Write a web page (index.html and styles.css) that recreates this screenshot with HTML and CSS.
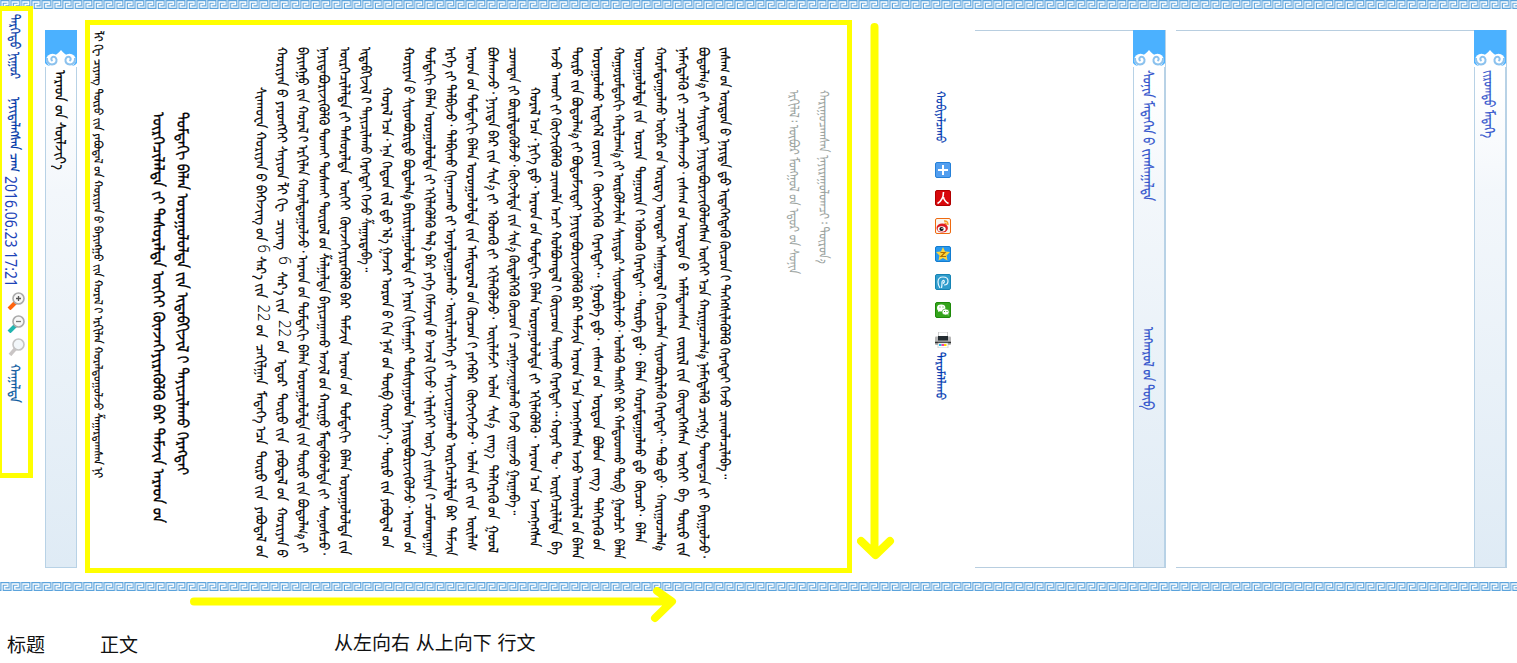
FILE: index.html
```
<!DOCTYPE html>
<html lang="mn-Mong">
<head>
<meta charset="utf-8">
<title>ᠮᠡᠳᠡᠭᠡ</title>
<link rel="stylesheet" href="styles.css">
</head>
<body>
<svg class="defs" width="0" height="0">
  <defs>
    <pattern id="meander" width="10.34" height="9" patternUnits="userSpaceOnUse">
      <path d="M7.200 3.200H3.200V8.400H11.200V.6M.86 9V.6H9.200V5.800H5.200M-6 8.400H.86" fill="none" stroke="#5ba3dc" stroke-width="1.150"/>
    </pattern>
    <symbol id="cap" viewBox="0 0 32 37">
      <path d="M0 0H32V37H0Z" fill="#4bb1ff"/>
      <path d="M0 37V33Q2 36 6 36Q9 30 8 26Q12 25 16 20Q20 25 24 26Q23 30 26 36Q30 36 32 33V37Z" fill="#fff"/>
      <circle cx="7.500" cy="30" r="6.300" fill="#fff"/><circle cx="24.500" cy="30" r="6.300" fill="#fff"/>
      <path d="M2 28Q1.500 34 7 34.500Q12 34 11.500 29.500Q10.500 26 7.500 27Q5 29 7.500 31M30 28Q30.500 34 25 34.500Q20 34 20.500 29.500Q21.500 26 24.500 27Q27 29 24.500 31" fill="none" stroke="#8cc2ee" stroke-width="2"/>
    </symbol>
  </defs>
</svg>

<svg class="border" width="1517" height="9"><rect width="1517" height="9" fill="url(#meander)"/></svg>

<div class="page">
  <div class="tools">
    <span class="v navy" data-h="65">ᠳᠡᠷᠭᠡᠳᠦ ᠨᠢᠭᠤᠷ</span>
    <span class="v navy second" data-h="75">ᠨᠡᠶᠢᠲᠡᠯᠡᠭᠰᠡᠨ ᠴᠠᠭ</span>
    <span class="v date" data-h="111">2016.06.23 17:21</span>
    <svg class="lens" viewBox="0 0 18 18"><path d="M9 10L2 17" stroke="#ff6510" stroke-width="4"/><circle cx="11.500" cy="6.500" r="5.500" fill="#f7f7f7" stroke="#aaa" stroke-width="1.600"/><path d="M9 6.500H14M11.500 4V9" stroke="#555" stroke-width="1.300"/></svg>
    <svg class="lens" viewBox="0 0 18 18"><path d="M9 10L2 17" stroke="#23b5b0" stroke-width="4"/><circle cx="11.500" cy="6.500" r="5.500" fill="#f7f7f7" stroke="#aaa" stroke-width="1.600"/><path d="M9 6.500H14" stroke="#777" stroke-width="1.300"/></svg>
    <svg class="lens" viewBox="0 0 18 18"><path d="M9 10L3 17" stroke="#c9c5c5" stroke-width="3.500"/><circle cx="11.500" cy="6.500" r="5.500" fill="#f2f7fa" stroke="#c4c4c4" stroke-width="1.600"/></svg>
    <span class="v teal" data-h="39">ᠬᠠᠭᠠᠯᠲᠠ</span>
  </div>

  <div class="rail source"><svg class="cap"><use href="#cap"/></svg><span class="v black" data-h="100">ᠠᠷᠠᠳ ᠤᠨ ᠰᠦᠯᠵᠢᠶ᠎ᠡ</span></div>

  <div class="article">
    <span class="v crumb" data-h="447">ᠯᠢ ᠬᠧ ᠴᠢᠶᠠᠩ ᠲᠥᠷᠥ ᠶᠢᠨ ᠶᠠᠪᠤᠳᠠᠯ ᠤᠨ ᠬᠣᠷᠢᠶᠠᠨ ᠤ ᠪᠠᠶᠢᠩᠭᠤ ᠶᠢᠨ ᠬᠤᠷᠠᠯ ᠢ ᠡᠷᠬᠢᠯᠡᠨ ᠬᠤᠷᠠᠯᠳᠤᠭᠤᠯᠵᠤ ᠱᠠᠭᠠᠷᠳᠠᠭᠰᠠᠨ ᠨᠢ</span>
    <div class="title">
      <span class="v" data-h="411">ᠥᠷᠭᠡᠴᠢᠯᠡᠯᠲᠡ ᠶᠢ ᠳᠠᠰᠤᠷᠠᠯᠲᠠ ᠦᠭᠡᠢ ᠭᠦᠨᠵᠡᠭᠡᠶᠢᠷᠡᠭᠦᠯᠬᠦ ᠪᠡᠷ ᠳᠠᠮᠵᠢᠨ ᠠᠷᠠᠳ ᠤᠨ</span>
      <span class="v" data-h="363">ᠲᠤᠮᠳᠠᠬᠢ ᠪᠡᠯᠡᠨ ᠤᠷᠤᠭᠤᠯᠤᠯᠲᠠ ᠶᠢᠨ ᠢᠳᠡᠪᠬᠢᠵᠢᠯ ᠢ ᠳᠠᠶᠢᠴᠢᠯᠠᠬᠤ ᠬᠡᠷᠡᠭᠲᠡᠢ</span>
    </div>
    <div class="body">
      <span class="v indent" data-h="471">ᠰᠢᠨᠬᠤᠸᠠ ᠬᠣᠷᠢᠶᠠᠨ ᠤ ᠪᠡᠭᠡᠵᠢᠩ ᠤᠨ <i>6</i> ᠰᠠᠷ᠎ᠠ ᠶᠢᠨ &nbsp;<i>22</i> ᠤᠨ &nbsp;ᠴᠠᠬᠢᠯᠭᠠᠨ &nbsp;ᠮᠡᠳᠡᠭᠡ ᠡᠴᠡ &nbsp;ᠲᠥᠷᠥ ᠶᠢᠨ &nbsp;ᠶᠠᠪᠤᠳᠠᠯ ᠤᠨ</span>
      <span class="v" data-h="511">ᠬᠣᠷᠢᠶᠠᠨ ᠤ ᠶᠡᠷᠦᠩᠬᠡᠢ ᠰᠠᠶᠢᠳ ᠯᠢ ᠬᠧ &nbsp;ᠴᠢᠶᠠᠩ &nbsp;<i>6</i> &nbsp;ᠰᠠᠷ᠎ᠠ ᠶᠢᠨ &nbsp;<i>22</i> ᠤᠨ &nbsp;ᠡᠳᠦᠷ &nbsp;ᠲᠥᠷᠥ ᠶᠢᠨ &nbsp;ᠶᠠᠪᠤᠳᠠᠯ ᠤᠨ &nbsp;ᠬᠣᠷᠢᠶᠠᠨ ᠤ</span>
      <span class="v" data-h="506">ᠪᠠᠶᠢᠩᠭᠤ ᠶᠢᠨ ᠬᠤᠷᠠᠯ ᠢ ᠡᠷᠬᠢᠯᠡᠨ ᠬᠤᠷᠠᠯᠳᠤᠭᠤᠯᠵᠤ᠂ ᠠᠷᠠᠳ ᠤᠨ ᠲᠤᠮᠳᠠᠬᠢ ᠪᠡᠯᠡᠨ ᠤᠷᠤᠭᠤᠯᠤᠯᠲᠠ ᠶᠢᠨ ᠲᠥᠷᠥ ᠶᠢᠨ ᠪᠣᠳᠤᠯᠭ᠎ᠠ ᠶᠢ</span>
      <span class="v" data-h="508">ᠨᠡᠶᠢᠳᠡᠪᠦᠷᠢᠵᠢᠭᠦᠯᠬᠦ ᠲᠤᠬᠠᠢ ᠲᠤᠰᠬᠠᠢ ᠲᠥᠷᠥᠯ ᠤᠨ ᠱᠠᠯᠭᠠᠯᠲᠠ ᠪᠠᠶᠢᠴᠠᠭᠠᠬᠤ ᠠᠵᠢᠯ ᠤᠨ ᠬᠠᠷᠢᠭᠤ ᠮᠡᠳᠡᠭᠦᠯᠦᠯᠲᠡ ᠶᠢ &nbsp;ᠰᠤᠨᠤᠰᠴᠤ᠂</span>
      <span class="v" data-h="508">ᠥᠷᠭᠡᠴᠢᠯᠡᠯᠲᠡ ᠶᠢ ᠳᠠᠰᠤᠷᠠᠯᠲᠠ &nbsp;ᠦᠭᠡᠢ &nbsp;ᠭᠦᠨᠵᠡᠭᠡᠶᠢᠷᠡᠭᠦᠯᠬᠦ ᠪᠡᠷ &nbsp;ᠳᠠᠮᠵᠢᠨ &nbsp;ᠠᠷᠠᠳ ᠤᠨ &nbsp;ᠲᠤᠮᠳᠠᠬᠢ &nbsp;ᠪᠡᠯᠡᠨ ᠤᠷᠤᠭᠤᠯᠤᠯᠲᠠ ᠶᠢᠨ</span>
      <span class="v" data-h="225">ᠢᠳᠡᠪᠬᠢᠵᠢᠯ ᠢ ᠳᠠᠶᠢᠴᠢᠯᠠᠬᠤ ᠬᠡᠷᠡᠭᠲᠡᠢ ᠭᠡᠵᠦ ᠱᠠᠭᠠᠷᠳᠠᠪᠠ᠃</span>
      <span class="v indent" data-h="461">ᠬᠤᠷᠠᠯ ᠡᠴᠡ᠂ ᠡᠨᠡ ᠬᠡᠳᠦᠨ ᠵᠢᠯ ᠳᠦ ᠡᠯ᠎ᠡ ᠭᠠᠵᠠᠷ ᠣᠷᠤᠨ ᠤ ᠬᠢᠨ ᠨᠠᠮ ᠤᠨ ᠲᠥᠪ ᠬᠣᠷᠢᠶ᠎ᠠ᠂ ᠲᠥᠷᠥ ᠶᠢᠨ ᠶᠠᠪᠤᠳᠠᠯ ᠤᠨ</span>
      <span class="v" data-h="507">ᠬᠣᠷᠢᠶᠠᠨ ᠤ ᠰᠢᠶᠳᠪᠦᠷᠢᠳᠦ ᠪᠣᠳᠤᠯᠭ᠎ᠠ ᠪᠠᠶᠢᠷᠢᠯᠠᠭᠤᠯᠤᠯᠲᠠ ᠶᠢ ᠨᠠᠷᠢᠨ ᠬᠢᠨᠠᠮᠠᠭᠠᠢ ᠲᠤᠰᠢᠶᠠᠭᠤᠯᠤᠨ ᠨᠡᠶᠢᠳᠡᠪᠦᠷᠢᠵᠢᠭᠦᠯᠵᠦ᠂ ᠠᠷᠠᠳ ᠤᠨ</span>
      <span class="v" data-h="510">ᠲᠤᠮᠳᠠᠬᠢ ᠪᠡᠯᠡᠨ ᠤᠷᠤᠭᠤᠯᠤᠯᠲᠠ ᠶᠢ ᠡᠬᠢᠯᠡᠭᠦᠯᠬᠦ ᠲᠠᠯ᠎ᠠ ᠪᠡᠷ ᠶᠡᠬᠡ ᠬᠡᠮᠵᠢᠶᠡᠨ ᠤ ᠠᠵᠢᠯ ᠬᠢᠵᠦ᠂ ᠢᠯᠡᠷᠬᠡᠢ ᠦᠷ᠎ᠡ ᠵᠢᠰᠢᠶᠡᠨ ᠢ ᠴᠣᠮᠤᠭᠳᠠᠭᠠᠨ</span>
      <span class="v" data-h="509">ᠡᠷᠬᠡ ᠶᠢ ᠲᠠᠯᠪᠢᠵᠤ᠂ ᠲᠠᠯᠪᠢᠬᠤ ᠬᠢᠨᠠᠨᠴᠠᠬᠤ ᠶᠢ ᠤᠶᠠᠯᠳᠤᠭᠤᠯᠬᠤ᠂ ᠥᠢᠯᠡᠴᠢᠯᠡᠭᠡ ᠶᠢ ᠰᠠᠶᠢᠵᠢᠷᠠᠭᠤᠯᠬᠤ ᠥᠷᠭᠡᠴᠢᠯᠡᠯᠲᠡ ᠪᠡᠷ &nbsp;ᠳᠠᠮᠵᠢᠨ</span>
      <span class="v" data-h="504">ᠠᠷᠠᠳ ᠤᠨ ᠲᠤᠮᠳᠠᠬᠢ ᠪᠡᠯᠡᠨ ᠤᠷᠤᠭᠤᠯᠤᠯᠲᠠ ᠶᠢᠨ ᠠᠮᠢᠳᠤᠷᠠᠯ ᠤᠨ ᠬᠥᠴᠦᠨ ᠢ ᠶᠡᠬᠡᠪᠡᠷ &nbsp;ᠬᠥᠭᠵᠢᠭᠡᠵᠦ᠂ &nbsp;ᠣᠯᠠᠨ ᠵᠢᠷ ᠶᠢᠨ &nbsp;ᠦᠢᠯᠡᠰ</span>
      <span class="v" data-h="506">ᠪᠣᠰᠬᠠᠵᠤ᠂ ᠨᠡᠶᠢᠲᠡ ᠪᠡᠷ ᠶᠢᠨ ᠰᠢᠨ᠎ᠡ ᠶᠢ &nbsp;ᠡᠭᠦᠳᠬᠦ ᠶᠢ &nbsp;ᠡᠬᠢᠯᠡᠭᠦᠯᠵᠦ᠂ &nbsp;ᠦᠢᠯᠡᠮᠵᠢ &nbsp;ᠣᠯᠠᠨ &nbsp;ᠰᠢᠨ᠎ᠡ &nbsp;ᠵᠠᠩ᠎ᠠ &nbsp;ᠳᠡᠯᠭᠡᠷᠡᠬᠦ ᠤᠨ &nbsp;ᠭᠣᠣᠯ</span>
      <span class="v" data-h="468">ᠴᠤᠭᠲᠠᠨ ᠶᠢ ᠪᠦᠷᠢᠯᠳᠦᠭᠦᠯᠵᠦ᠂ ᠬᠥᠭᠵᠢᠯᠲᠡ ᠶᠢᠨ ᠰᠢᠨ᠎ᠡ ᠬᠥᠳᠡᠯᠭᠡᠬᠦ ᠬᠥᠴᠦᠨ ᠢ ᠴᠢᠩᠭᠠᠵᠢᠭᠤᠯᠬᠤ ᠭᠡᠵᠦ ᠵᠢᠭᠠᠵᠤ ᠭᠠᠷᠭᠠᠪᠠ᠃</span>
      <span class="v indent" data-h="460">ᠬᠤᠷᠠᠯ ᠡᠴᠡ᠂ ᠨᠢᠭᠡ ᠳᠦ᠂ ᠠᠷᠠᠳ ᠤᠨ ᠲᠤᠮᠳᠠᠬᠢ ᠪᠡᠯᠡᠨ ᠤᠷᠤᠭᠤᠯᠤᠯᠲᠠ ᠶᠢ &nbsp;ᠡᠬᠢᠯᠡᠭᠦᠯᠬᠦ᠂ &nbsp;ᠠᠷᠠᠳ ᠡᠴᠡ &nbsp;ᠡᠵᠡᠩᠨᠡᠭᠰᠡᠨ</span>
      <span class="v" data-h="508">ᠠᠵᠤ ᠠᠬᠤᠢ ᠶᠢ ᠬᠥᠭᠵᠢᠭᠦᠯᠬᠦ ᠴᠢᠬᠤᠯᠠ ᠠᠴᠢ ᠬᠣᠯᠪᠤᠭᠳᠠᠯ ᠢ ᠭᠦᠢᠴᠡᠳ ᠲᠠᠨᠢᠬᠤ ᠬᠡᠷᠡᠭᠲᠡᠢ᠃ ᠬᠣᠶᠠᠷ ᠲᠤ᠂ &nbsp;ᠥᠷᠭᠡᠴᠢᠯᠡᠯᠲᠡ &nbsp;ᠪᠠ</span>
      <span class="v" data-h="512">ᠲᠥᠷᠥ ᠶᠢᠨ ᠪᠣᠳᠤᠯᠭ᠎ᠠ ᠶᠢ ᠪᠣᠳᠤᠮᠵᠢᠲᠠᠢ ᠨᠡᠶᠢᠳᠡᠪᠦᠷᠢᠵᠢᠭᠦᠯᠬᠦ ᠪᠡᠷ ᠳᠠᠮᠵᠢᠨ ᠠᠷᠠᠳ ᠡᠴᠡ ᠡᠵᠡᠩᠨᠡᠭᠰᠡᠨ ᠠᠵᠤ ᠠᠬᠤᠶᠢᠯᠠᠯ ᠤᠨ ᠪᠡᠯᠡᠨ</span>
      <span class="v" data-h="504">ᠤᠷᠤᠭᠤᠯᠬᠤ ᠢᠳᠡᠬᠡᠯ ᠵᠣᠷᠢᠭ ᠢ &nbsp;ᠬᠥᠭᠵᠢᠭᠡᠬᠦ &nbsp;ᠬᠡᠷᠡᠭᠲᠡᠢ᠃ &nbsp;ᠭᠤᠷᠪᠠ ᠳᠤ᠂ &nbsp;ᠵᠠᠰᠠᠭ ᠤᠨ &nbsp;ᠣᠷᠳᠤᠨ &nbsp;ᠪᠣᠯᠤᠨ &nbsp;ᠵᠠᠩ᠎ᠠ &nbsp;ᠳᠡᠯᠭᠡᠷᠡᠬᠦ ᠤᠨ</span>
      <span class="v" data-h="512">ᠬᠤᠭᠤᠷᠤᠮᠳᠤᠬᠢ ᠬᠠᠷᠢᠯᠴᠠᠭ᠎ᠠ ᠶᠢ ᠦᠷᠭᠦᠯᠵᠢᠯᠡᠨ ᠰᠠᠶᠢᠳᠤᠷ ᠰᠢᠶᠳᠪᠦᠷᠢᠯᠡᠵᠦ᠂ ᠡᠳᠯᠡᠬᠦ ᠳᠡᠩᠰᠢ ᠪᠡᠷ ᠬᠠᠮᠳᠤᠳᠬᠤ ᠲᠥᠪ &nbsp;ᠭᠣᠣᠯᠴᠢ &nbsp;ᠪᠡᠯᠡᠨ</span>
      <span class="v" data-h="496">ᠤᠷᠤᠭᠤᠯᠤᠯᠲᠠ ᠶᠢᠨ &nbsp;ᠣᠷᠴᠢᠨ &nbsp;ᠲᠣᠭᠤᠷᠢᠨ ᠢ ᠡᠭᠦᠳᠬᠦ ᠬᠡᠷᠡᠭᠲᠡᠢ᠃ ᠳᠥᠷᠪᠡ ᠳᠦ᠂ &nbsp;ᠪᠡᠯᠡᠨ &nbsp;ᠬᠤᠷᠠᠮᠳᠤᠭᠤᠯᠬᠤ ᠳᠤ &nbsp;ᠬᠦᠴᠦᠷ᠂ &nbsp;ᠪᠡᠯᠡᠨ</span>
      <span class="v" data-h="504">ᠬᠤᠷᠠᠮᠳᠤᠭᠤᠯᠬᠤ ᠥᠪᠡᠷ ᠤᠨ ᠥᠷᠳᠡᠭ ᠥᠨᠳᠦᠷ ᠠᠰᠠᠭᠤᠳᠠᠯ ᠢ ᠬᠦᠴᠦᠯᠡᠨ ᠰᠢᠶᠳᠪᠦᠷᠢᠯᠡᠬᠦ ᠬᠡᠷᠡᠭᠲᠡᠢ᠃ ᠲᠠᠪᠤ ᠳᠤ᠂ &nbsp;ᠬᠠᠷᠢᠭᠤᠴᠠᠯᠭ᠎ᠠ</span>
      <span class="v" data-h="510">ᠨᠡᠮᠡᠭᠳᠡᠯᠬᠦ ᠶᠢ ᠴᠢᠩᠭᠠᠲᠬᠠᠵᠤ᠂ ᠵᠠᠰᠠᠭ ᠤᠨ ᠣᠷᠳᠤᠨ ᠤ &nbsp;ᠠᠮᠠᠯᠳᠠᠭᠰᠠᠨ &nbsp;ᠵᠥᠷᠢᠯ ᠶᠢᠨ &nbsp;ᠬᠥᠨᠳᠡᠭᠡᠭᠰᠡᠨ &nbsp;ᠦᠭᠡᠢ &nbsp;ᠪᠠ &nbsp;ᠲᠥᠷᠥ ᠶᠢᠨ</span>
      <span class="v" data-h="511">ᠪᠣᠳᠤᠯᠭ᠎ᠠ ᠶᠢ ᠰᠠᠶᠢᠳᠤᠷ ᠨᠡᠶᠢᠳᠡᠪᠦᠷᠢᠵᠢᠭᠦᠯᠦᠭᠰᠡᠨ ᠦᠭᠡᠢ ᠡᠴᠡ ᠬᠠᠷᠢᠭᠤᠴᠠᠯᠭ᠎ᠠ ᠨᠡᠮᠡᠭᠳᠡᠯᠬᠦ ᠴᠢᠩᠭ᠎ᠠ ᠲᠤᠭᠲᠠᠴᠠ ᠶᠢ &nbsp;ᠪᠠᠶᠢᠭᠤᠯᠵᠤ᠂</span>
      <span class="v" data-h="432">ᠵᠠᠰᠠᠭ ᠤᠨ ᠣᠷᠳᠤᠨ ᠤ ᠨᠡᠶᠢᠲᠡ ᠳᠦ ᠢᠲᠡᠭᠡᠭᠳᠡᠬᠦ ᠬᠦᠴᠦᠨ ᠢ ᠳᠡᠭᠡᠭᠰᠢᠯᠡᠭᠦᠯᠬᠦ ᠬᠡᠷᠡᠭᠲᠡᠢ ᠭᠡᠵᠦ ᠴᠢᠬᠤᠯᠠᠴᠢᠯᠠᠪᠠ᠃</span>
    </div>
    <div class="credits">
      <span class="v" data-h="184">ᠡᠷᠬᠢᠯᠡᠯ᠄ ᠥᠪᠥᠷ ᠮᠣᠩᠭᠣᠯ ᠤᠨ ᠡᠳᠦᠷ ᠤᠨ ᠰᠣᠨᠢᠨ</span>
      <span class="v" data-h="174">ᠬᠠᠷᠢᠭᠤᠴᠠᠭᠰᠠᠨ ᠨᠠᠶᠢᠷᠠᠭᠤᠯᠤᠭᠴᠢ᠄ ᠲᠥᠷᠦᠨ᠎ᠡ</span>
    </div>
  </div>

  <svg class="down" viewBox="0 0 38 540"><path d="M17.500 4V530M4 518L18.500 532L33 518" fill="none" stroke="#ff0" stroke-width="8" stroke-linecap="round" stroke-linejoin="round"/></svg>

  <div class="share">
    <span class="v" data-h="52">ᠬᠤᠪᠢᠶᠠᠯᠴᠠᠬᠤ</span>
    <svg class="icon first" viewBox="0 0 16 16"><rect x=".5" y=".5" width="15" height="15" rx="1.500" fill="#529eef" stroke="#2580d8"/><path d="M8 3V13M3 8H13" stroke="#fff" stroke-width="2"/></svg>
    <svg class="icon" viewBox="0 0 16 16"><rect x=".5" y=".5" width="15" height="15" rx="1.500" fill="#d8080c" stroke="#b00000"/><path d="M8.500 2Q8.500 10 2.500 13.500M8.500 7Q9 11 13.500 13.500" fill="none" stroke="#fff" stroke-width="1.600"/></svg>
    <svg class="icon" viewBox="0 0 16 16"><rect x=".5" y=".5" width="15" height="15" rx="1.500" fill="#faf6ef" stroke="#ee6a10"/><path d="M9 3Q13 2.500 13 7M9.500 5.300Q11.500 5 11 7" fill="none" stroke="#f59a20" stroke-width="1.400"/><ellipse cx="7.200" cy="10" rx="5.700" ry="4.500" fill="#df1d22"/><ellipse cx="6.700" cy="11" rx="4" ry="2.800" fill="#fff"/><circle cx="6.500" cy="11" r="2.100" fill="#111"/><circle cx="7" cy="10.500" r=".7" fill="#fff"/></svg>
    <svg class="icon" viewBox="0 0 16 16"><rect x=".5" y=".5" width="15" height="15" rx="1.500" fill="#2999ee" stroke="#127cd0"/><path d="M8 1L10 5.500L15 6L11.500 9.500L12.500 14.500L8 12L3.500 14.500L4.500 9.500L1 6L6 5.500Z" fill="#ffd63b"/><path d="M5.500 6.500H10L6 10.500H11" fill="none" stroke="#b06d00" stroke-width="1.200"/></svg>
    <svg class="icon" viewBox="0 0 16 16"><rect x=".5" y=".5" width="15" height="15" rx="1.500" fill="#2f9ccc" stroke="#1683b4"/><path d="M5 14Q3 11 3 8Q3 3 8 3Q13 3 13 7Q13 11 9 11M6.500 14Q7 12 7 8Q7.500 6 9 6.500Q10 8 8 9.500" fill="none" stroke="#e6f7ff" stroke-width="1.200"/></svg>
    <svg class="icon" viewBox="0 0 16 16"><rect x=".5" y=".5" width="15" height="15" rx="1.500" fill="#34a41c" stroke="#1d8909"/><path d="M3 10L3.500 7.500H6L4.500 9.200ZM13.500 13.500L13 11H11L12 12.800Z" fill="#fff"/><ellipse cx="6.200" cy="6" rx="4.200" ry="3.400" fill="#fff"/><ellipse cx="10.600" cy="10" rx="3.600" ry="3" fill="#fff" stroke="#34a41c" stroke-width=".6"/><path d="M4.500 5H5.500M7.500 5H8.500M9 9.500H10M11.500 9.500H12.500" stroke="#34a41c"/></svg>
    <svg class="icon printer" viewBox="0 0 16 16"><path d="M3.500 0H12.500V5H3.500Z" fill="#fff" stroke="#aaa" stroke-width=".6"/><rect y="4.500" width="16" height="8.500" rx="1" fill="#b5b5b5"/><rect x="3" y="4" width="10" height="4.500" fill="#222b30"/><path d="M0 10.500H16" stroke="#333" stroke-width="1.500"/><rect x="3" y="11" width="10" height="5" fill="#fff" stroke="#aaa" stroke-width=".5"/><path d="M4 13H6.500" stroke="#20b8e8" stroke-width="2"/><path d="M6.500 13H9" stroke="#f43ca0" stroke-width="2"/><path d="M9 13H11.500" stroke="#ffd000" stroke-width="2"/></svg>
    <span class="v" data-h="48">ᠳᠠᠷᠤᠮᠠᠯᠯᠠᠬᠤ</span>
  </div>

  <div class="panel latest"><div class="rail"><svg class="cap"><use href="#cap"/></svg><span class="v" data-h="131">ᠰᠣᠨᠢᠨ ᠮᠡᠳᠡᠭᠡᠨ ᠤ ᠵᠢᠭᠰᠠᠭᠠᠯᠲᠠ</span><span class="v more" data-h="83">ᠠᠩᠬᠠᠷᠤᠯ ᠤᠨ ᠲᠥᠪ</span></div></div>
  <div class="panel photo"><div class="rail"><svg class="cap"><use href="#cap"/></svg><span class="v" data-h="68">ᠵᠢᠷᠤᠭᠲᠤ ᠮᠡᠳᠡᠭᠡ</span></div></div>
</div>

<svg class="border" width="1517" height="9"><rect width="1517" height="9" fill="url(#meander)"/></svg>

<div class="legend" lang="zh">
  <svg class="right" viewBox="0 0 488 38"><path d="M4 14.500H478M467 4L482 14.500L465 31" fill="none" stroke="#ff0" stroke-width="8" stroke-linecap="round" stroke-linejoin="round"/></svg>
  <span class="heading">标题</span><span class="text">正文</span><span class="order">从左向右 从上向下 行文</span>
</div>
<script src="fit.js"></script>
</body>
</html>
```

FILE: styles.css
```
* { box-sizing: border-box; }
body { margin: 0; width: 1517px; height: 663px; overflow: hidden; background: #fff; font-family: "Noto Sans Mongolian", "Noto Sans", sans-serif; }
svg { display: block; flex: none; }
.defs { position: absolute; }
.page { display: flex; align-items: flex-start; height: 573px; }

/* One vertical line of script, scaled along its length to data-h */
.v { flex: none; display: block; writing-mode: vertical-lr; white-space: nowrap; width: 21px; line-height: 21px; font-size: 14px; -webkit-text-stroke: .2px currentColor; }
.v i { font: 300 17px/1 "Noto Sans", sans-serif; -webkit-text-stroke: 0; }
.run { display: block; width: max-content; height: max-content; transform-origin: 0 0; }

.tools { position: relative; display: flex; flex-direction: column; align-items: flex-start; width: 33px; height: 472px; margin-top: -3px; padding: 3px 0 0 5px; border: solid #ff0; border-width: 5px 5px 5px 2px; }
.tools .navy { color: #0038a8; }
.tools .second { margin-top: 18px; }
.tools .date { margin: 4px 0 4px -6px; color: #1f45b8; font: 17px/21px "Noto Sans", sans-serif; -webkit-text-stroke: 0; }
.tools .teal { margin-top: 4px; color: #0a5aa0; }
.lens { width: 18px; height: 18px; margin: 1px 0 4px; }

.rail { display: flex; flex-direction: column; align-items: flex-start; width: 33px; height: 538px; border: 1px solid #b8d2e6; border-right-width: 2px; background: linear-gradient(#fff 10%, #f3f7fb 30%, #dfebf5 100%); color: #3355cc; }
.rail .cap { width: 32px; height: 37px; margin: -1px -1px 0; }
.rail .v { margin: 3px 0 0 7px; font-size: 15px; }
.rail .more { margin-top: 126px; }
.source { width: 32px; margin: 21px 8px 0 12px; border-right-width: 1px; }
.rail .black { color: #000; }

.article { display: flex; align-items: flex-start; width: 767px; height: 553px; margin-top: 11px; border: 5px solid #ff0; color: #000; }
.crumb { width: 17px; line-height: 17px; margin: 6px 0 0 2px; font-size: 12px; }
.title { display: flex; align-items: flex-start; margin: 87px 0 0 41px; }
.title .v { width: 24px; line-height: 24px; font-size: 16px; -webkit-text-stroke: .35px currentColor; }
.body { display: flex; align-items: flex-start; margin: 22px 0 0 55px; }
.body .v { width: 21.08px; }
.body .indent { margin-top: 62px; }
.body .indent { margin-top: 40px; }
.credits { display: flex; align-items: flex-start; gap: 9px; margin: 65px 0 0 48px; color: #9ba3a0; }
.credits .v { -webkit-text-stroke: 0; }

.down { width: 38px; height: 540px; margin: 14px 0 0 5px; }

.share { display: flex; flex-direction: column; align-items: center; width: 20px; margin: 82px 0 0 38px; color: #0038b0; }
.share .v { font-size: 13px; }
.icon { width: 16px; height: 16px; margin-bottom: 12px; }
.icon.first { margin-top: 19px; }
.icon.printer { margin: 2px 0 4px; }

.panel { display: flex; justify-content: flex-end; height: 538px; margin-top: 21px; border: solid #b8cee0; border-width: 1px 0; }
.panel .rail { height: 536px; border-top: 0; border-bottom: 0; }
.latest { width: 191px; margin-left: 22px; }
.photo { width: 331px; margin-left: 10px; }

.legend { position: relative; display: flex; padding: 40px 0 0 7px; font: 19px/26px "Noto Sans CJK SC", sans-serif; color: #111; }
.right { position: absolute; left: 190px; top: -4px; width: 488px; height: 38px; }
.heading { width: 93px; }
.text { width: 234px; }
.order { margin-top: -2px; white-space: pre; word-spacing: 1.500px; }
```

FILE: fit.js
```
// Case suffixes attach to the preceding word with a narrow no-break space.
const suffix = / (ᠤᠨ|ᠤ|ᠢ|ᠶᠢᠨ|ᠶᠢ|ᠳᠤ|ᠳᠦ)(?=[\s\u00a0᠂]|$)/g;

for (const el of document.querySelectorAll('.v')) {
  const run = document.createElement('span');
  run.className = 'run';
  while (el.firstChild) run.appendChild(el.firstChild);
  for (const node of run.childNodes) {
    if (node.nodeType === Node.TEXT_NODE) {
      node.data = node.data.replace(suffix, '\u202f$1');
    }
  }
  el.appendChild(run);
  const target = Number(el.dataset.h);
  const natural = run.getBoundingClientRect().height;
  el.style.height = target + 'px';
  run.style.transform = `scaleY(${target / natural})`;
}
```
